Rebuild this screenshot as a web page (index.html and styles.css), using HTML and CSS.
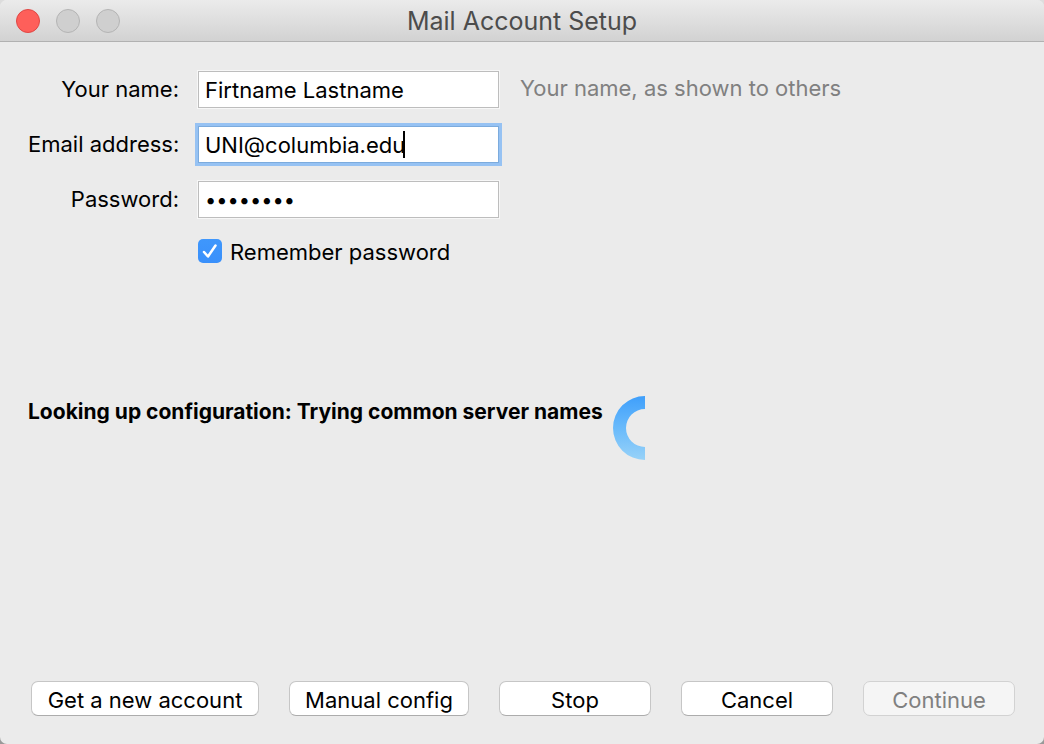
FILE: index.html
```html
<!DOCTYPE html>
<html lang="en">
<head>
    <meta charset="UTF-8">
    <meta name="viewport" content="width=device-width, initial-scale=1.0">
    <title>Mail Account Setup</title>
    <link rel="stylesheet" href="styles.css">
</head>
<body>
    <div class="window">
        <header class="titlebar">
            <div class="lights">
                <button type="button" class="light close" aria-label="Close"></button>
                <button type="button" class="light" aria-label="Minimize" disabled></button>
                <button type="button" class="light" aria-label="Zoom" disabled></button>
            </div>
            <h1>Mail Account Setup</h1>
        </header>

        <form class="setup">
            <div class="fields">
                <label for="name">Your name:</label>
                <input class="text" type="text" id="name" value="Firtname Lastname">
                <span class="hint">Your name, as shown to others</span>

                <label for="email">Email address:</label>
                <div class="field">
                    <input class="text active" type="text" id="email" value="UNI@columbia.edu">
                    <span class="caret"></span>
                </div>

                <label for="password">Password:</label>
                <input class="text" type="password" id="password" value="password">

                <div class="remember">
                    <input type="checkbox" id="remember" checked>
                    <svg class="tick" viewBox="0 0 24 24"><path d="M6 13 L10 17.5 L17.5 6.5"/></svg>
                    <label for="remember">Remember password</label>
                </div>
            </div>

            <div class="status">
                <p>Looking up configuration: Trying common server names</p>
                <svg class="spinner" viewBox="0 0 32 64">
                    <defs>
                        <linearGradient id="ring" x1="0" y1="0" x2="0" y2="1">
                            <stop offset="0" stop-color="#3f9ffb"/>
                            <stop offset="0.5" stop-color="#69bafb"/>
                            <stop offset="1" stop-color="#98d2f8"/>
                        </linearGradient>
                    </defs>
                    <path fill="url(#ring)" d="M32 0 A32 32 0 0 0 32 64 V51 A19 19 0 0 1 32 13 Z"/>
                </svg>
            </div>

            <div class="buttons">
                <button type="button" class="wide">Get a new account</button>
                <button type="button" class="medium">Manual config</button>
                <button type="button">Stop</button>
                <button type="button">Cancel</button>
                <button type="submit" disabled>Continue</button>
            </div>
        </form>
    </div>
</body>
</html>
```
FILE: styles.css
```css
* {
    box-sizing: border-box;
}
body {
    margin: 0;
    background: linear-gradient(#ddd, #999);
    color: #000;
    font-family: Inter, sans-serif;
    font-size: 22px;
    line-height: 28px;
}
input, button {
    font: inherit;
    color: inherit;
}
.window {
    display: flex;
    flex-direction: column;
    min-height: 100vh;
    background-color: #ebebeb;
    border-radius: 7px;
    overflow: hidden;
}
.titlebar {
    display: grid;
    grid-template-columns: 1fr auto 1fr;
    align-items: center;
    height: 42px;
    padding: 0 16px;
    background: linear-gradient(#ebebeb, #d2d2d2);
    border-bottom: 1px solid #b1b1b1;
}
.titlebar h1 {
    margin: 0;
    font-size: 25px;
    font-weight: 400;
    color: #4c4c4c;
}
.lights {
    display: flex;
    gap: 16px;
}
.light {
    width: 24px;
    height: 24px;
    padding: 0;
    border: 1px solid #b4b4b4;
    border-radius: 50%;
    background-color: #cfcfcf;
}
.light.close {
    border-color: #e04744;
    background-color: #fe5f5a;
}
.setup {
    flex: 1;
    display: flex;
    flex-direction: column;
    padding: 29px 29px 28px 28px;
}
.fields {
    display: grid;
    grid-template-columns: 151px 301px auto;
    align-items: center;
    justify-content: start;
    column-gap: 19px;
    row-gap: 18px;
}
.fields > label {
    grid-column: 1;
    padding-bottom: 2px;
    text-align: right;
    white-space: nowrap;
}
.text {
    display: block;
    width: 100%;
    height: 37px;
    padding: 0 6px;
    border: 1px solid #bdbdbd;
    border-radius: 0;
    outline: 1px solid #f7f7f7;
    background-color: #fff;
}
.text[type="password"] {
    font-size: 20px;
}
.text.active {
    border-color: #7cabdd;
    outline: 3px solid #96c2f3;
}
.field {
    position: relative;
}
.caret {
    position: absolute;
    top: 5px;
    left: 205px;
    width: 2px;
    height: 27px;
    background-color: #000;
}
.hint {
    padding: 0 0 4px 2px;
    color: #808080;
}
.remember {
    grid-column: 2;
    display: grid;
    grid-template-columns: 24px auto;
    align-items: center;
    justify-content: start;
    column-gap: 8px;
}
.remember label {
    padding-top: 2px;
}
.remember input {
    appearance: none;
    grid-area: 1 / 1;
    width: 24px;
    height: 24px;
    margin: 0;
    border-radius: 5px;
    background: linear-gradient(#3f97fc, #3a90fb);
}
.tick {
    grid-area: 1 / 1;
    width: 24px;
    height: 24px;
    pointer-events: none;
}
.tick path {
    fill: none;
    stroke: #fff;
    stroke-width: 2.5;
    stroke-linecap: round;
    stroke-linejoin: round;
}
.status {
    display: flex;
    align-items: flex-start;
    gap: 10px;
    margin-top: 130px;
}
.status p {
    margin: 2px 0 0;
    font-size: 21px;
    font-weight: 700;
}
.spinner {
    width: 32px;
    height: 64px;
}
.buttons {
    display: flex;
    justify-content: flex-end;
    gap: 30px;
    margin-top: auto;
}
.buttons button {
    width: 152px;
    height: 35px;
    padding: 2px 0 0;
    border: 1px solid #c6c6c6;
    border-bottom-color: #acacac;
    border-radius: 7px;
    background-color: #fff;
    white-space: nowrap;
}
.buttons .wide {
    width: 228px;
}
.buttons .medium {
    width: 180px;
}
.buttons button:disabled {
    border-color: #d2d2d2;
    background-color: #f5f5f5;
    color: #808080;
}
```
